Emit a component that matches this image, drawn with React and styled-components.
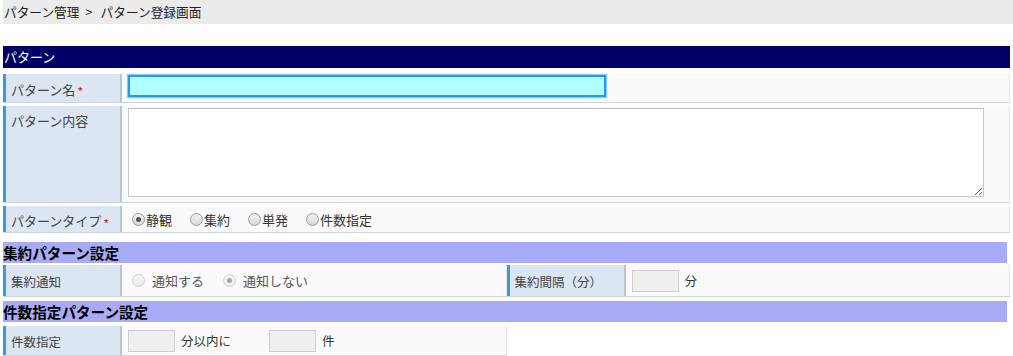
import React from 'react';
import styled, { createGlobalStyle } from 'styled-components';

const GlobalStyle = createGlobalStyle`
  html, body {
    margin: 0;
    padding: 0;
    background: #ffffff;
  }
  body {
    font-family: "Noto Sans CJK JP", "Noto Sans", sans-serif;
    font-size: 13px;
    color: #333333;
  }
`;

const Radio = ({ label, checked, disabled, gap }) => (
  <RadioLabel $disabled={disabled} $gap={gap}>
    <RadioInput type="radio" defaultChecked={checked} disabled={disabled} />
    {label}
  </RadioLabel>
);

const App = () => {
  return (
    <>
      <GlobalStyle />
      <Breadcrumb>
        パターン管理<Sep>&gt;</Sep>パターン登録画面
      </Breadcrumb>
      <Main>
        <NavyBar>パターン</NavyBar>

        <Row $mt={6} $h={29}>
          <Label>
            パターン名<Required>*</Required>
          </Label>
          <Cell>
            <NameInput />
          </Cell>
        </Row>

        <Row $mt={3} $h={97}>
          <Label $top>パターン内容</Label>
          <Cell $top>
            <Memo />
          </Cell>
        </Row>

        <Row $mt={3} $h={27}>
          <Label>
            パターンタイプ<Required>*</Required>
          </Label>
          <Cell $px={10}>
            <RadioGroup $gap={18}>
              <Radio label="静観" checked />
              <Radio label="集約" />
              <Radio label="単発" />
              <Radio label="件数指定" />
            </RadioGroup>
          </Cell>
        </Row>

        <SectionBar $mt={9}>集約パターン設定</SectionBar>

        <SplitRow>
          <Row $half $h={32}>
            <Label $small>集約通知</Label>
            <Cell $px={10}>
              <RadioGroup $gap={19}>
                <Radio label="通知する" disabled gap={7} />
                <Radio label="通知しない" checked disabled gap={7} />
              </RadioGroup>
            </Cell>
          </Row>
          <Row $half $h={32}>
            <Label $small>集約間隔（分）</Label>
            <Cell>
              <SmallInput />
              <Unit>分</Unit>
            </Cell>
          </Row>
        </SplitRow>

        <SectionBar $mt={4}>件数指定パターン設定</SectionBar>

        <Row $mt={4} $half $h={30}>
          <Label $small>件数指定</Label>
          <Cell>
            <SmallInput />
            <Unit $mr={38}>分以内に</Unit>
            <SmallInput />
            <Unit>件</Unit>
          </Cell>
        </Row>
      </Main>
    </>
  );
};

const Breadcrumb = styled.div`
  margin-left: 3px;
  height: 24px;
  line-height: 23px;
  padding-left: 1px;
  background: #ebebeb;
  font-size: 12.7px;
  color: #222222;
`;

const Sep = styled.span`
  margin: 0 8px 0 6px;
`;

const Main = styled.div`
  padding: 22px 3px 0 3px;
  width: 1007px;
`;

const NavyBar = styled.div`
  height: 22px;
  line-height: 21px;
  background: #000066;
  color: #ffffff;
  font-size: 13px;
  padding-left: 1px;
`;

const SectionBar = styled.div`
  margin-top: ${p => p.$mt || 0}px;
  margin-right: 3px;
  height: 21px;
  line-height: 22px;
  background: #a8acf6;
  color: #000000;
  font-size: 14.6px;
  font-weight: bold;
`;

const SplitRow = styled.div`
  display: flex;
  margin-top: 2px;
`;

const Row = styled.div`
  display: flex;
  margin-top: ${p => p.$mt || 0}px;
  width: ${p => (p.$half ? '504px' : '100%')};
  height: ${p => p.$h}px;
  background: #fafafb;
  border-bottom: 1px solid #cdd4e0;
  border-right: 1px solid #e2e5ea;
  box-sizing: border-box;
`;

const Label = styled.div`
  flex: 0 0 119px;
  box-sizing: border-box;
  display: flex;
  align-items: ${p => (p.$top ? 'flex-start' : 'center')};
  padding: ${p => (p.$top ? '5px 0 0 5px' : '2px 0 0 5px')};
  background: #dce6f3;
  border-left: 3px solid #3a9ade;
  border-right: 2px solid #b9c5d6;
  color: #444444;
  font-size: ${p => (p.$small ? '12.5px' : '13px')};
  white-space: nowrap;
`;

const Required = styled.span`
  color: #e8142c;
  font-size: 13px;
  line-height: 1;
  margin-left: 2px;
  align-self: flex-start;
  margin-top: 9px;
`;

const Cell = styled.div`
  flex: 1;
  display: flex;
  align-items: ${p => (p.$top ? 'flex-start' : 'center')};
  padding: ${p => (p.$top ? '2px' : '0')} 6px 0 ${p => p.$px || 6}px;
`;

const NameInput = styled.input`
  width: 478px;
  height: 22px;
  box-sizing: border-box;
  margin: 0 0 4px;
  background: #b3ffff;
  border: 2px solid #1f9bf5;
  box-shadow: 0 0 1px 1px #8ccdf8;
  outline: none;
`;

const Memo = styled.textarea`
  width: 856px;
  height: 89px;
  box-sizing: border-box;
  margin: 0;
  border: 1px solid #c8c8c8;
  border-top-color: #bdbdbd;
  background: #ffffff;
`;

const RadioGroup = styled.div`
  display: flex;
  align-items: center;
  gap: ${p => p.$gap}px;
`;

const RadioLabel = styled.label`
  display: flex;
  align-items: center;
  gap: ${p => p.$gap || 1}px;
  font-size: 13px;
  color: ${p => (p.$disabled ? '#555555' : '#333333')};
`;

const RadioInput = styled.input`
  appearance: none;
  width: 13px;
  height: 13px;
  margin: 0;
  border-radius: 50%;
  border: 1px solid ${p => (p.disabled ? '#d0d0d0' : '#9a9a9a')};
  background: ${p =>
    p.disabled
      ? 'linear-gradient(#f6f6f6, #ececec)'
      : 'linear-gradient(#f2f2f2, #d8d8d8)'};
  display: grid;
  place-items: center;
  box-sizing: border-box;

  &:checked::after {
    content: '';
    width: 5px;
    height: 5px;
    border-radius: 50%;
    background: ${p => (p.disabled ? '#a8a8a8' : '#555555')};
  }
`;

const SmallInput = styled.input`
  width: 47px;
  height: 22px;
  box-sizing: border-box;
  margin: 0;
  background: #efefef;
  border: 1px solid #cfcfcf;
  outline: none;
`;

const Unit = styled.span`
  margin-left: 6px;
  margin-right: ${p => p.$mr || 0}px;
  font-size: 12.5px;
  color: #333333;
`;

export default App;
